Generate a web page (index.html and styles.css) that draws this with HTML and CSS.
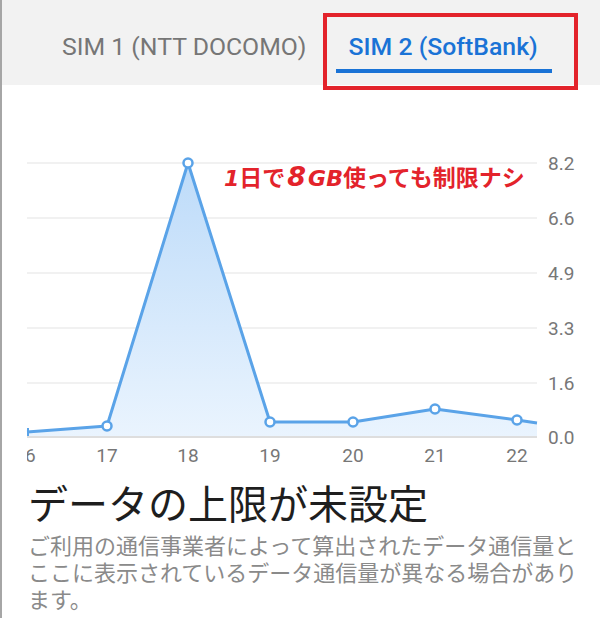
FILE: index.html
```html
<!DOCTYPE html>
<html lang="ja">
<head>
<meta charset="utf-8">
<link rel="stylesheet" href="styles.css">
</head>
<body>
<div class="page">
  <div class="tabbar">
    <div class="tab">SIM 1 (NTT DOCOMO)</div>
    <div class="tab active">SIM 2 (SoftBank)</div>
    <div class="callout-box"></div>
  </div>
  <div class="chart">
    <svg class="chart-svg" width="600" height="390" viewBox="0 85 600 390" xmlns="http://www.w3.org/2000/svg">
      <defs>
        <linearGradient id="fill" x1="0" y1="163" x2="0" y2="437" gradientUnits="userSpaceOnUse">
          <stop offset="0" stop-color="#bddbf9"/>
          <stop offset="1" stop-color="#eaf4fe"/>
        </linearGradient>
        <clipPath id="plot">
          <rect x="27" y="85" width="520" height="390"/>
        </clipPath>
      </defs>
      <g stroke="#ececec" stroke-width="1.5">
        <line x1="27" y1="163" x2="537" y2="163"/>
        <line x1="27" y1="218" x2="537" y2="218"/>
        <line x1="27" y1="273" x2="537" y2="273"/>
        <line x1="27" y1="328" x2="537" y2="328"/>
        <line x1="27" y1="383" x2="537" y2="383"/>
      </g>
      <polygon fill="url(#fill)" points="27,432 107,426 188,163 270,422 353,422 435,409 517,420 537,423 537,437 27,437"/>
      <line x1="27" y1="437" x2="537" y2="437" stroke="#dedede" stroke-width="2"/>
      <polyline fill="none" stroke="#5aa3e8" stroke-width="3" stroke-linejoin="round" points="27,432 107,426 188,163 270,422 353,422 435,409 517,420 537,423"/>
      <line x1="28" y1="428" x2="28" y2="436" stroke="#5aa3e8" stroke-width="2"/>
      <g fill="#ffffff" stroke="#5aa3e8" stroke-width="2.5">
        <circle cx="107" cy="426" r="4.5"/>
        <circle cx="188" cy="163" r="4.5"/>
        <circle cx="270" cy="422" r="4.5"/>
        <circle cx="353" cy="422" r="4.5"/>
        <circle cx="435" cy="409" r="4.5"/>
        <circle cx="517" cy="420" r="4.5"/>
      </g>
      <g class="axis-y">
        <text x="548" y="170">8.2</text>
        <text x="548" y="225">6.6</text>
        <text x="548" y="280">4.9</text>
        <text x="548" y="335">3.3</text>
        <text x="548" y="390">1.6</text>
        <text x="548" y="444">0.0</text>
      </g>
      <g class="axis-x" clip-path="url(#plot)">
        <text x="25" y="462">16</text>
        <text x="107" y="462">17</text>
        <text x="188" y="462">18</text>
        <text x="270" y="462">19</text>
        <text x="353" y="462">20</text>
        <text x="435" y="462">21</text>
        <text x="517" y="462">22</text>
      </g>
    </svg>
    <div class="note"><span class="lat">1</span>日で<span class="lat big">8</span><span class="lat">GB</span>使っても制限ナシ</div>
  </div>
  <div class="content">
    <h1 class="title">データの上限が未設定</h1>
    <p class="desc">ご利用の通信事業者によって算出されたデータ通信量とここに表示されているデータ通信量が異なる場合があります。</p>
  </div>
</div>
</body>
</html>
```
FILE: styles.css
```css
html, body {
  margin: 0;
  padding: 0;
  background: #ffffff;
}
.page {
  width: 598px;
  min-height: 618px;
  border-left: 2px solid #a6a6a6;
  overflow: hidden;
  font-family: Roboto, "Noto Sans CJK JP", sans-serif;
}
.tabbar {
  position: relative;
  height: 85px;
  background: #f2f2f2;
  display: flex;
  align-items: flex-start;
  gap: 15px;
  padding-left: 46px;
  box-sizing: border-box;
}
.tab {
  padding: 33px 14px 8px;
  font-size: 24.8px;
  line-height: 28px;
  color: #767676;
  border-bottom: 4px solid transparent;
  white-space: nowrap;
}
.tab.active {
  color: #1a73d6;
  font-weight: 500;
  border-bottom-color: #1a73d6;
  padding-left: 13px;
  padding-right: 14px;
}
.callout-box {
  position: absolute;
  left: 321px;
  top: 13px;
  width: 255px;
  height: 77px;
  box-sizing: border-box;
  border: 4px solid #e3232b;
}
.chart {
  position: relative;
  height: 390px;
}
.chart-svg {
  display: block;
  margin-left: -2px;
}
.axis-y text {
  font-family: Roboto, sans-serif;
  font-size: 19px;
  fill: #777777;
}
.axis-x text {
  font-family: Roboto, sans-serif;
  font-size: 19px;
  fill: #777777;
  text-anchor: middle;
}
.note {
  position: absolute;
  left: 222px;
  top: 76px;
  font-family: "Noto Sans CJK JP", sans-serif;
  font-weight: 700;
  font-size: 23px;
  line-height: 30px;
  color: #e3232b;
  white-space: nowrap;
}
.note .lat {
  font-family: "DejaVu Sans", sans-serif;
  font-style: italic;
  font-weight: 700;
  font-size: 22px;
}
.note .big {
  font-size: 27px;
  margin: 0 2px;
}
.content {
  padding: 3px 20px 0 26px;
}
.title {
  margin: 0;
  font-family: "Noto Sans CJK JP", sans-serif;
  font-weight: 400;
  font-size: 40px;
  line-height: 48px;
  color: #1e1e1e;
}
.desc {
  margin: 5px 0 0;
  font-family: "Noto Sans CJK JP", sans-serif;
  font-size: 22px;
  line-height: 27px;
  color: #8a8a8a;
  width: 556px;
}
```
